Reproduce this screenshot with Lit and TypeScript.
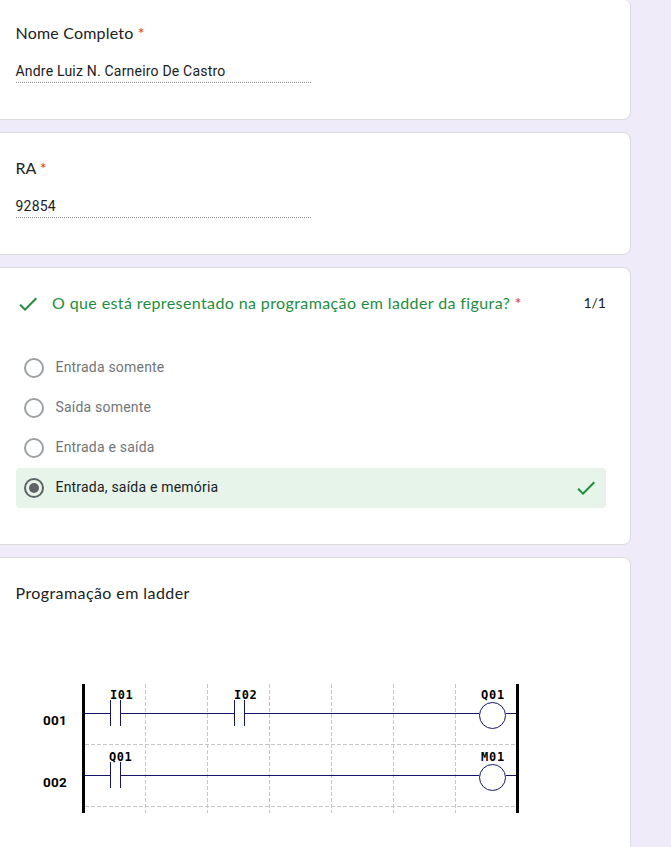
import { LitElement, html, svg, css } from "lit";
import { customElement } from "lit/decorators.js";
import { classMap } from "lit/directives/class-map.js";

const check = html`<svg class="check" width="24" height="24" viewBox="0 0 24 24">
  <path d="M9 16.17L4.83 12l-1.42 1.41L9 19 21 7l-1.41-1.41z" />
</svg>`;

const options = [
  { label: "Entrada somente", selected: false },
  { label: "Saída somente", selected: false },
  { label: "Entrada e saída", selected: false },
  { label: "Entrada, saída e memória", selected: true },
];

@customElement("ladder-diagram")
class LadderDiagram extends LitElement {
  static styles = css`
    :host { display: block; }
    svg { display: block; }
    .rail { fill: #000; }
    .wire { stroke: #14146a; fill: none; }
    .coil { stroke: #14146a; fill: #fff; }
    .grid { stroke: #c6c6c6; stroke-dasharray: 4 2; fill: none; shape-rendering: crispEdges; }
    .tag { font: bold 12px "DejaVu Sans Mono", monospace; }
    .num { font: bold 13.5px Roboto, sans-serif; }
  `;

  contact(x: number, y: number, label: string, tx: number) {
    return svg`<path class="wire" d="M${x + 0.5} ${y - 13}v26M${x + 10.5} ${y - 13}v26" />
      <text class="tag" x=${tx} y=${y - 14} textLength="23">${label}</text>`;
  }

  coil(y: number, label: string) {
    return svg`<circle class="coil" cx="452.5" cy=${y + 2.5} r="13" />
      <text class="tag" x="441" y=${y - 14} textLength="23.5">${label}</text>`;
  }

  render() {
    return html`<svg width="480" height="129" viewBox="0 0 480 129">
      <path class="grid" d="M105.5 0v129M167.5 0v129M229.5 0v129M291.5 0v129M353.5 0v129M415.5 0v129M45 60.5h431M45 122.5h431" />
      <path class="wire" d="M45 29.5h25M80 29.5h114M204 29.5h235M466 29.5h11M45 91.5h25M80 91.5h359M466 91.5h11" />
      <rect class="rail" x="42" width="3" height="129" />
      <rect class="rail" x="476" width="3" height="129" />
      ${this.contact(70, 29, "I01", 70)} ${this.contact(194, 29, "I02", 194)}
      ${this.contact(70, 91, "Q01", 69)} ${this.coil(29, "Q01")} ${this.coil(91, "M01")}
      <text class="num" x="3" y="41" textLength="24">001</text>
      <text class="num" x="3" y="103" textLength="24">002</text>
    </svg>`;
  }
}

@customElement("app-root")
class AppRoot extends LitElement {
  static styles = css`
    :host {
      display: flex; flex-direction: column; gap: 12px; box-sizing: border-box;
      height: 847px; overflow: hidden; background: #efebf8; color: #202124;
      font-family: Roboto, sans-serif; font-size: 14px; letter-spacing: 0.2px; line-height: 20px;
    }
    .card {
      box-sizing: border-box; flex: none; width: 631px; background: #fff;
      border: 1px solid #dadce0; border-left: 0; border-radius: 0 8px 8px 0;
      padding: 23px 24px 0 15.5px; height: 123px;
    }
    .first { height: 120px; border-top: 0; border-top-right-radius: 6px; padding-top: 21px; }
    .quiz { height: 278px; padding-left: 16px; }
    .figure { height: 310px; }
    .title { font: 16px/24px Lato, sans-serif; letter-spacing: 0.42px; }
    .short { letter-spacing: 0.2px; }
    .ra { letter-spacing: -0.1px; }
    .req { color: #d93025; }
    .answer { width: 295px; height: 21px; margin: 16px 0 0 0.5px; text-indent: -0.5px; border-bottom: 1px dotted #8a8d91; }
    .head { display: flex; }
    .head .title { color: #1e8e3e; flex: 1; margin-left: 12px; letter-spacing: 0.39px; }
    .head .check { margin-top: 1px; }
    .points { font: 14px/24px Lato, sans-serif; letter-spacing: 0; color: #202124; }
    .check { fill: #1e8e3e; flex: none; }
    .options { margin-top: 32px; }
    .option {
      display: flex; align-items: center; height: 40px; width: 590px; box-sizing: border-box;
      padding: 0 8px; border-radius: 4px; color: #70757a;
    }
    .option.selected { background: #e6f4ea; color: #202124; }
    .radio {
      width: 20px; height: 20px; box-sizing: border-box; border: 2px solid #9aa0a6;
      border-radius: 50%; display: grid; place-items: center; margin-right: 11.5px;
    }
    .selected .radio { border-color: #5f6368; }
    .selected .radio::after { content: ""; width: 10px; height: 10px; border-radius: 50%; background: #5f6368; }
    .label { flex: 1; padding-bottom: 2px; }
    ladder-diagram { margin: 79px 0 0 24.5px; }
  `;

  render() {
    return html`
      <section class="card first">
        <div class="title short">Nome Completo <span class="req">*</span></div>
        <div class="answer">Andre Luiz N. Carneiro De Castro</div>
      </section>
      <section class="card">
        <div class="title ra">RA <span class="req">*</span></div>
        <div class="answer">92854</div>
      </section>
      <section class="card quiz">
        <div class="head">
          ${check}
          <div class="title">O que está representado na programação em ladder da figura? <span class="req">*</span></div>
          <div class="points">1/1</div>
        </div>
        <div class="options">
          ${options.map((o) => html`<div class=${classMap({ option: true, selected: o.selected })}>
            <span class="radio"></span><span class="label">${o.label}</span>${o.selected ? check : ""}
          </div>`)}
        </div>
      </section>
      <section class="card figure">
        <div class="title">Programação em ladder</div>
        <ladder-diagram></ladder-diagram>
      </section>
    `;
  }
}
